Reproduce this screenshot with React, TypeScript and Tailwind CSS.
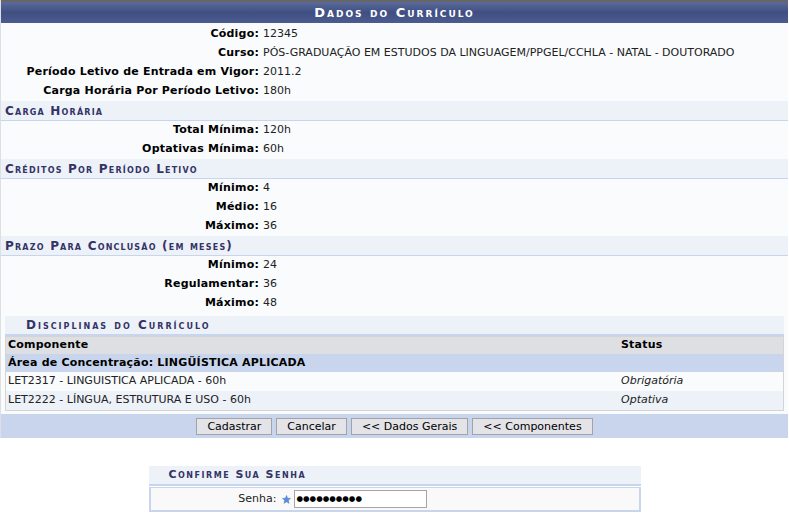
const font = { fontFamily: '"DejaVu Sans", Verdana, sans-serif' };

function Row({ label, value }: { label: string; value: string }) {
  return (
    <div className="flex h-[19px] items-center">
      <div className="w-[258px] shrink-0 text-right font-bold tracking-[0.2px] text-black">{label}</div>
      <div className="pl-[4px] text-[#222]">{value}</div>
    </div>
  );
}

function Section({ title }: { title: string }) {
  return (
    <div className="flex h-[20px] items-center border-b border-[#c8d5ec] bg-[#edf1f8] pl-[4px] text-[12px] font-bold tracking-[1.2px] text-[#333366] [font-variant:small-caps]">
      {title}
    </div>
  );
}

function Btn({ children }: { children: React.ReactNode }) {
  return (
    <button className="h-[17px] border border-[#a3a3a3] bg-[#e3e3e8] px-[10px] text-[11px] leading-none text-black">
      {children}
    </button>
  );
}

export default function App() {
  return (
    <div className="min-h-[514px] w-[789px] bg-white text-[11px]" style={font}>
      <div className="w-[788px] border-l border-[#dcdfe6] bg-[#f9fbfd]">
        <div className="flex h-[23px] items-center justify-center border-t-2 border-[#666] bg-gradient-to-b from-[#5a6a9a] via-[#3f4f82] to-[#4c5c90] text-[13px] font-bold tracking-[2px] text-white [font-variant:small-caps]">
          Dados do Currículo
        </div>
        <div className="pt-[2px]">
          <Row label="Código:" value="12345" />
          <Row label="Curso:" value="PÓS-GRADUAÇÃO EM ESTUDOS DA LINGUAGEM/PPGEL/CCHLA - NATAL - DOUTORADO" />
          <Row label="Período Letivo de Entrada em Vigor:" value="2011.2" />
          <Row label="Carga Horária Por Período Letivo:" value="180h" />
        </div>
        <Section title="Carga Horária" />
        <Row label="Total Mínima:" value="120h" />
        <Row label="Optativas Mínima:" value="60h" />
        <Section title="Créditos Por Período Letivo" />
        <Row label="Mínimo:" value="4" />
        <Row label="Médio:" value="16" />
        <Row label="Máximo:" value="36" />
        <Section title="Prazo Para Conclusão (em meses)" />
        <Row label="Mínimo:" value="24" />
        <Row label="Regulamentar:" value="36" />
        <Row label="Máximo:" value="48" />

        <div className="px-[4px] pb-[3px] pt-[3px]">
          <div className="flex h-[20px] items-center border-b-2 border-[#c8d5ec] bg-[#edf1f8] pl-[21px] text-[12px] font-bold tracking-[2px] text-[#333366] [font-variant:small-caps]">
            Disciplinas do Currículo
          </div>
          <div className="border border-[#d4d4d4]">
            <div className="flex h-[17px] items-center bg-[#dedfe3] font-bold tracking-[0.2px] text-black">
              <div className="w-[615px] pl-[2px]">Componente</div>
              <div>Status</div>
            </div>
            <div className="flex h-[18px] items-center bg-[#c8d5ec] pl-[2px] font-bold tracking-[0.2px] text-black">
              Área de Concentração: LINGÜÍSTICA APLICADA
            </div>
            <div className="flex h-[19px] items-center bg-[#f9fbfd] text-[#222]">
              <div className="w-[615px] pl-[2px]">LET2317 - LINGUISTICA APLICADA - 60h</div>
              <div className="italic">Obrigatória</div>
            </div>
            <div className="flex h-[19px] items-center bg-[#edf1f8] text-[#222]">
              <div className="w-[615px] pl-[2px]">LET2222 - LÍNGUA, ESTRUTURA E USO - 60h</div>
              <div className="italic">Optativa</div>
            </div>
          </div>
        </div>

        <div className="flex h-[24px] items-center justify-center gap-[4px] bg-[#c8d5ec]">
          <Btn>Cadastrar</Btn>
          <Btn>Cancelar</Btn>
          <Btn>&lt;&lt; Dados Gerais</Btn>
          <Btn>&lt;&lt; Componentes</Btn>
        </div>
      </div>

      <div className="mx-auto mt-[28px] w-[492px]">
        <div className="flex h-[20px] items-center border-b-2 border-[#c8d5ec] bg-[#edf1f8] pl-[20px] font-bold tracking-[1.5px] text-[#333366] [font-variant:small-caps]">
          Confirme Sua Senha
        </div>
        <div className="mt-[1px] flex h-[25px] items-center border-2 border-t border-[#c8d5ec] bg-[#f9f9f9]">
          <div className="w-[126px] text-right text-[#222]">Senha:</div>
          <svg className="ml-[5px]" width="9" height="9" viewBox="0 0 10 10">
            <path d="M5 0.5 L6.2 3.6 L9.5 3.8 L7 5.9 L7.8 9.3 L5 7.5 L2.2 9.3 L3 5.9 L0.5 3.8 L3.8 3.6 Z" fill="#5b8de0" stroke="#3a6cc4" strokeWidth="0.5" />
          </svg>
          <div className="ml-[3px] flex h-[18px] w-[133px] items-center border border-[#a5a5a5] bg-white pl-[2px] text-[7.5px] text-black">
            ●●●●●●●●●●
          </div>
        </div>
      </div>
    </div>
  );
}
